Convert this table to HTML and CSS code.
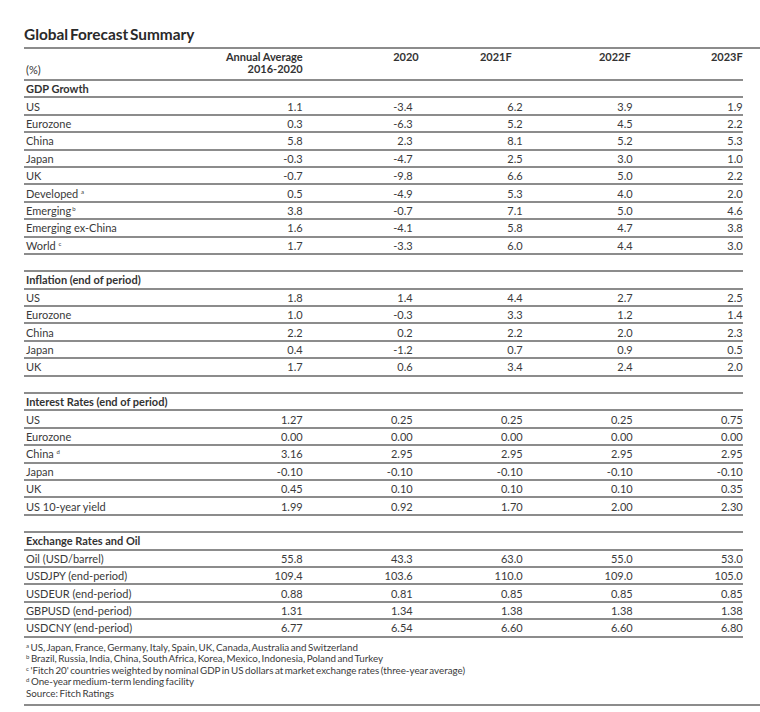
FILE: index.html
```html
<!DOCTYPE html>
<html>
<head>
<meta charset="utf-8">
<link rel="stylesheet" href="styles.css">
</head>
<body>
<div class="page">
  <h1 class="title">Global Forecast Summary</h1>
  <div class="rule"></div>
  <div class="table">
    <div class="row head">
      <div class="lbl pct">(%)</div>
      <div class="num h-avg">Annual Average<br>2016-2020</div>
      <div class="num h-2020">2020</div>
      <div class="num h-2021">2021F</div>
      <div class="num h-2022">2022F</div>
      <div class="num h-2023">2023F</div>
    </div>

    <div class="row sec"><div class="lbl">GDP Growth</div></div>
    <div class="row"><div class="lbl">US</div><div class="num">1.1</div><div class="num">-3.4</div><div class="num">6.2</div><div class="num">3.9</div><div class="num">1.9</div></div>
    <div class="row"><div class="lbl">Eurozone</div><div class="num">0.3</div><div class="num">-6.3</div><div class="num">5.2</div><div class="num">4.5</div><div class="num">2.2</div></div>
    <div class="row"><div class="lbl">China</div><div class="num">5.8</div><div class="num">2.3</div><div class="num">8.1</div><div class="num">5.2</div><div class="num">5.3</div></div>
    <div class="row"><div class="lbl">Japan</div><div class="num">-0.3</div><div class="num">-4.7</div><div class="num">2.5</div><div class="num">3.0</div><div class="num">1.0</div></div>
    <div class="row"><div class="lbl">UK</div><div class="num">-0.7</div><div class="num">-9.8</div><div class="num">6.6</div><div class="num">5.0</div><div class="num">2.2</div></div>
    <div class="row"><div class="lbl">Developed <sup class="fn">a</sup></div><div class="num">0.5</div><div class="num">-4.9</div><div class="num">5.3</div><div class="num">4.0</div><div class="num">2.0</div></div>
    <div class="row"><div class="lbl">Emerging<sup class="fn fn-tight">b</sup></div><div class="num">3.8</div><div class="num">-0.7</div><div class="num">7.1</div><div class="num">5.0</div><div class="num">4.6</div></div>
    <div class="row"><div class="lbl">Emerging ex-China</div><div class="num">1.6</div><div class="num">-4.1</div><div class="num">5.8</div><div class="num">4.7</div><div class="num">3.8</div></div>
    <div class="row"><div class="lbl">World <sup class="fn">c</sup></div><div class="num">1.7</div><div class="num">-3.3</div><div class="num">6.0</div><div class="num">4.4</div><div class="num">3.0</div></div>
    <div class="row spacer"></div>

    <div class="row sec"><div class="lbl">Inflation (end of period)</div></div>
    <div class="row"><div class="lbl">US</div><div class="num">1.8</div><div class="num">1.4</div><div class="num">4.4</div><div class="num">2.7</div><div class="num">2.5</div></div>
    <div class="row"><div class="lbl">Eurozone</div><div class="num">1.0</div><div class="num">-0.3</div><div class="num">3.3</div><div class="num">1.2</div><div class="num">1.4</div></div>
    <div class="row"><div class="lbl">China</div><div class="num">2.2</div><div class="num">0.2</div><div class="num">2.2</div><div class="num">2.0</div><div class="num">2.3</div></div>
    <div class="row"><div class="lbl">Japan</div><div class="num">0.4</div><div class="num">-1.2</div><div class="num">0.7</div><div class="num">0.9</div><div class="num">0.5</div></div>
    <div class="row"><div class="lbl">UK</div><div class="num">1.7</div><div class="num">0.6</div><div class="num">3.4</div><div class="num">2.4</div><div class="num">2.0</div></div>
    <div class="row spacer"></div>

    <div class="row sec"><div class="lbl">Interest Rates (end of period)</div></div>
    <div class="row"><div class="lbl">US</div><div class="num">1.27</div><div class="num">0.25</div><div class="num">0.25</div><div class="num">0.25</div><div class="num">0.75</div></div>
    <div class="row"><div class="lbl">Eurozone</div><div class="num">0.00</div><div class="num">0.00</div><div class="num">0.00</div><div class="num">0.00</div><div class="num">0.00</div></div>
    <div class="row"><div class="lbl">China <sup class="fn">d</sup></div><div class="num">3.16</div><div class="num">2.95</div><div class="num">2.95</div><div class="num">2.95</div><div class="num">2.95</div></div>
    <div class="row"><div class="lbl">Japan</div><div class="num">-0.10</div><div class="num">-0.10</div><div class="num">-0.10</div><div class="num">-0.10</div><div class="num">-0.10</div></div>
    <div class="row"><div class="lbl">UK</div><div class="num">0.45</div><div class="num">0.10</div><div class="num">0.10</div><div class="num">0.10</div><div class="num">0.35</div></div>
    <div class="row"><div class="lbl">US 10-year yield</div><div class="num">1.99</div><div class="num">0.92</div><div class="num">1.70</div><div class="num">2.00</div><div class="num">2.30</div></div>
    <div class="row spacer"></div>

    <div class="row sec"><div class="lbl">Exchange Rates and Oil</div></div>
    <div class="row"><div class="lbl">Oil (USD/barrel)</div><div class="num">55.8</div><div class="num">43.3</div><div class="num">63.0</div><div class="num">55.0</div><div class="num">53.0</div></div>
    <div class="row"><div class="lbl">USDJPY (end-period)</div><div class="num">109.4</div><div class="num">103.6</div><div class="num">110.0</div><div class="num">109.0</div><div class="num">105.0</div></div>
    <div class="row"><div class="lbl">USDEUR (end-period)</div><div class="num">0.88</div><div class="num">0.81</div><div class="num">0.85</div><div class="num">0.85</div><div class="num">0.85</div></div>
    <div class="row"><div class="lbl">GBPUSD (end-period)</div><div class="num">1.31</div><div class="num">1.34</div><div class="num">1.38</div><div class="num">1.38</div><div class="num">1.38</div></div>
    <div class="row"><div class="lbl">USDCNY (end-period)</div><div class="num">6.77</div><div class="num">6.54</div><div class="num">6.60</div><div class="num">6.60</div><div class="num">6.80</div></div>
  </div>
  <div class="notes">
    <p><span class="nfn">a</span> US, Japan, France, Germany, Italy, Spain, UK, Canada, Australia and Switzerland</p>
    <p><span class="nfn">b</span> Brazil, Russia, India, China, South Africa, Korea, Mexico, Indonesia, Poland and Turkey</p>
    <p><span class="nfn">c</span> 'Fitch 20' countries weighted by nominal GDP in US dollars at market exchange rates (three-year average)</p>
    <p><span class="nfn">d</span> One-year medium-term lending facility</p>
    <p>Source: Fitch Ratings</p>
  </div>
  <div class="rule rule-bottom"></div>
</div>
</body>
</html>
```

FILE: styles.css
```css
* { box-sizing: border-box; }
html, body { margin: 0; padding: 0; background: #ffffff; }
body {
  font-family: Lato, "Liberation Sans", sans-serif;
  color: #3a3a3a;
}
.page {
  padding-left: 24px;
  padding-top: 24px;
}
.title {
  margin: 0;
  font-size: 15.4px;
  line-height: 20px;
  font-weight: 700;
  color: #2a2a2a;
  word-spacing: -2px;
}
.rule {
  margin-top: 3px;
  height: 2px;
  background: #8c8c8c;
}
.rule-bottom { margin-top: 0; }
.table {
  width: 719px;
}
.row {
  display: grid;
  grid-template-columns: 168.7px repeat(5, 110px);
  height: 17.4px;
  border-bottom: 2px solid #8c8c8c;
  align-items: center;
  font-size: 11px;
  line-height: 13px;
}
.row.head {
  height: 32px;
  align-items: start;
  font-weight: 700;
  color: #333333;
  line-height: 12px;
  padding-top: 2px;
}
.lbl {
  padding-left: 2px;
  white-space: nowrap;
}
.num {
  text-align: right;
  white-space: nowrap;
}
.pct {
  align-self: end;
  padding-bottom: 3px;
  font-weight: 400;
}
.h-2020 { margin-right: -6px; }
.h-2021 { padding-right: 11px; }
.h-2022 { padding-right: 2px; }
.sec {
  font-weight: 700;
  color: #333333;
}
.fn {
  font-size: 6px;
  line-height: 0;
  vertical-align: 4px;
}
.fn-tight { margin-left: 1px; }
.notes {
  padding-top: 4px;
  padding-bottom: 5px;
  font-size: 9.8px;
  line-height: 11.6px;
  word-spacing: -1px;
  color: #3a3a3a;
}
.notes p {
  margin: 0;
  padding-left: 2px;
  white-space: nowrap;
  height: 11.6px;
}
.nfn {
  display: inline-block;
  font-size: 6px;
  line-height: 6px;
  vertical-align: top;
  margin-top: 1px;
}
```
